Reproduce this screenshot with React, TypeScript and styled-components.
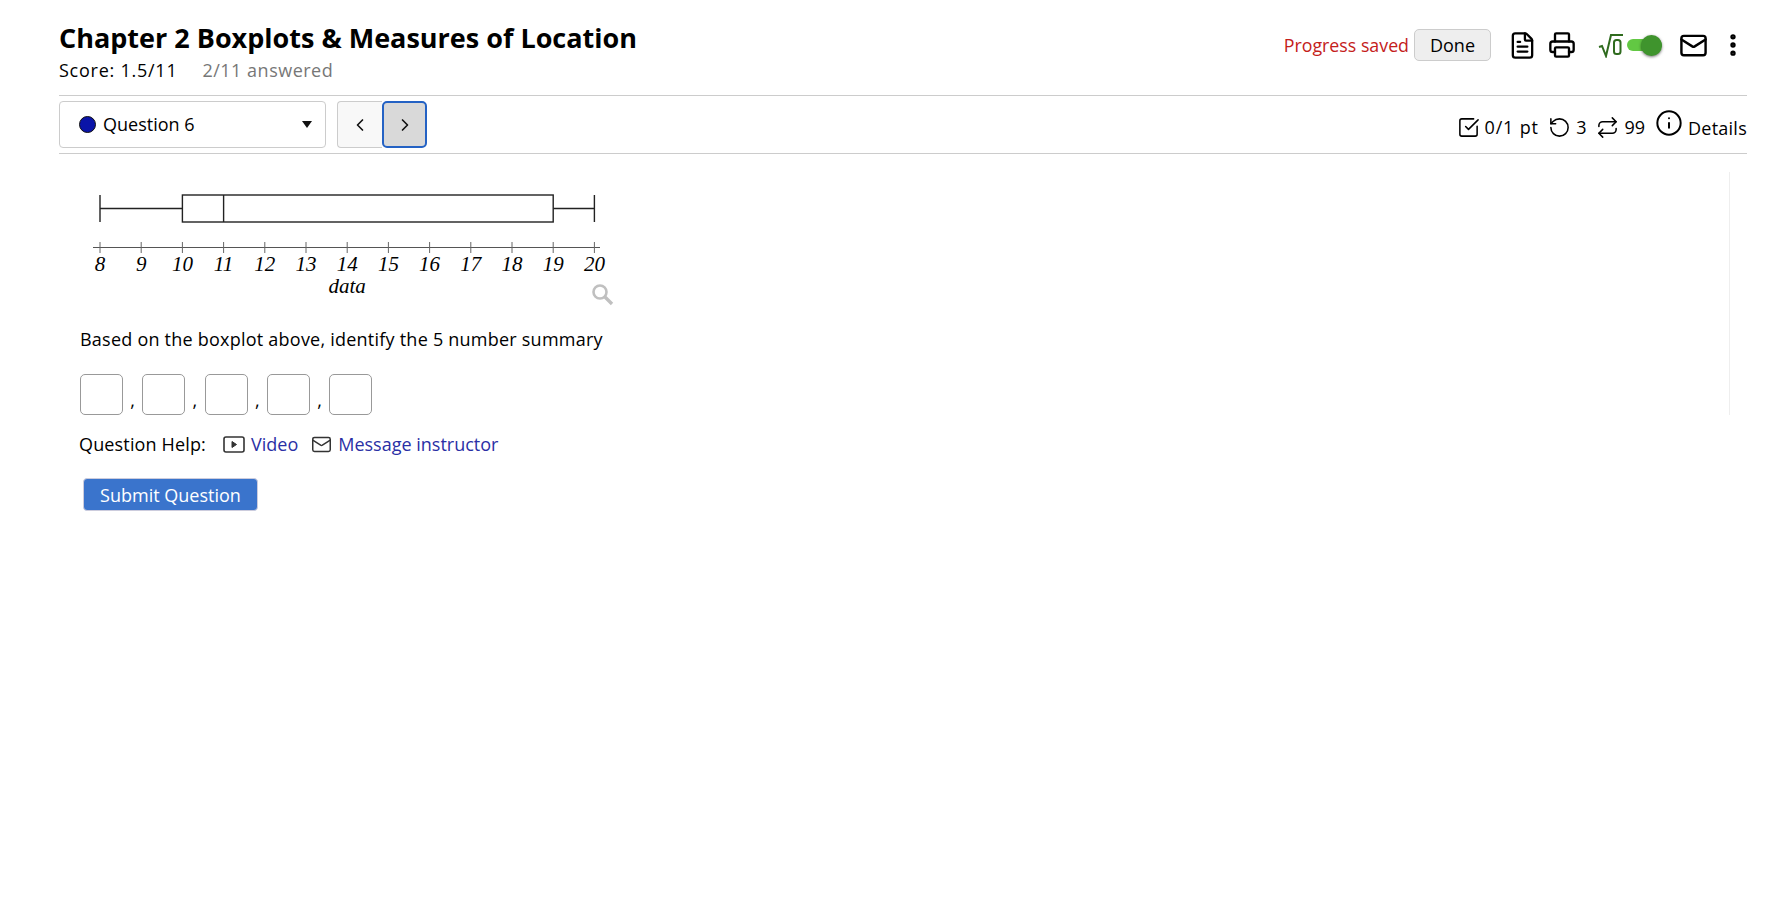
import React from 'react';
import styled, { createGlobalStyle } from 'styled-components';
import { ChevronLeft, ChevronRight, EllipsisVertical, FileText, Info, Mail, Printer, Repeat, RotateCcw, SquareCheckBig } from 'lucide-react';

const GlobalStyle = createGlobalStyle`
  html, body {
    margin: 0;
    padding: 0;
    background: #fff;
    color: #000;
    font-family: "Open Sans", "Liberation Sans", sans-serif;
  }
`;

const Page = styled.div`
  width: 1775px;
  height: 899px;
  padding: 0 28px 0 59px;
  box-sizing: border-box;
  overflow: hidden;
`;

const Header = styled.header`
  height: 95px;
  display: flex;
  justify-content: space-between;
  border-bottom: 1px solid #ccc;
  box-sizing: content-box;
`;

const TitleBlock = styled.div`
  padding-top: 18px;
`;

const Title = styled.h1`
  margin: 0;
  font-size: 27px;
  line-height: 40px;
  font-weight: 700;
`;

const ScoreRow = styled.div`
  display: flex;
  gap: 25px;
  font-size: 18px;
  line-height: 24px;
  letter-spacing: 0.75px;
`;

const Answered = styled.span`
  color: #777;
  letter-spacing: 0.5px;
`;

const Tools = styled.div`
  display: flex;
  align-items: center;
  height: 32px;
  margin-top: 29px;
`;

const SavedText = styled.span`
  color: #c4201a;
  font-size: 17.8px;
  margin-right: 5px;
`;

const DoneButton = styled.button`
  width: 77px;
  height: 32px;
  padding: 0;
  border: 1px solid #ccc;
  border-radius: 5px;
  background: #eee;
  color: #000;
  font: inherit;
  font-size: 18px;
`;

const ToolIcon = styled.span<{ $left: number }>`
  display: flex;
  margin-left: ${({ $left }) => $left}px;
`;

const SqrtIcon = styled.svg`
  display: block;
  margin-left: 22.5px;
`;

const Toggle = styled.span`
  position: relative;
  display: block;
  width: 35px;
  height: 12px;
  margin-left: 4px;
  border-radius: 6px;
  background: #62c843;
`;

const ToggleKnob = styled.span`
  position: absolute;
  right: 0;
  top: -4.5px;
  width: 21px;
  height: 21px;
  border-radius: 50%;
  background: #3f942d;
  box-shadow: 0 1px 3px rgba(0, 0, 0, 0.55);
`;

const QuestionBar = styled.div`
  height: 57px;
  display: flex;
  align-items: center;
  justify-content: space-between;
  border-bottom: 1px solid #ccc;
`;

const Nav = styled.div`
  display: flex;
  align-items: center;
`;

const QuestionSelect = styled.div`
  width: 267px;
  height: 47px;
  box-sizing: border-box;
  padding: 0 13px 0 19px;
  display: flex;
  align-items: center;
  gap: 7px;
  border: 1px solid #ccc;
  border-radius: 4px;
  font-size: 18px;
`;

const QuestionLabel = styled.span`
  position: relative;
  top: -1px;
`;

const StatusDot = styled.span`
  width: 15px;
  height: 15px;
  border-radius: 50%;
  background: #0a14a8;
  border: 1px solid #111;
`;

const Caret = styled.span`
  margin-left: auto;
  width: 0;
  height: 0;
  border-left: 5px solid transparent;
  border-right: 5px solid transparent;
  border-top: 7px solid #111;
`;

const PrevButton = styled.button`
  margin-left: 11px;
  width: 45px;
  height: 47px;
  padding: 0;
  display: flex;
  align-items: center;
  justify-content: center;
  background: #f8f8f8;
  border: 1px solid #ccc;
  border-right: 0;
  border-radius: 4px 0 0 4px;
`;

const NextButton = styled.button`
  width: 45px;
  height: 47px;
  padding: 0;
  display: flex;
  align-items: center;
  justify-content: center;
  background: #d9d9d9;
  border: 2px solid #2462c4;
  border-radius: 5px;
`;

const Stats = styled.div`
  display: flex;
  align-items: center;
  padding-top: 5px;
  font-size: 18px;
`;

const Stat = styled.span<{ $left: number; $spacing: number }>`
  display: flex;
  align-items: center;
  gap: 5px;
  margin-left: ${({ $left }) => $left}px;
  letter-spacing: ${({ $spacing }) => $spacing}px;
`;

const DetailsLabel = styled.span`
  position: relative;
  top: 1px;
`;

const InfoIcon = styled.span`
  display: flex;
  position: relative;
  top: -4px;
`;

const Body = styled.main`
  margin-top: 18px;
  height: 243px;
  border-right: 1px solid #eee;
  margin-right: 17px;
  padding-left: 21px;
`;

const Chart = styled.svg`
  display: block;
  margin-bottom: 21px;
`;

const Prompt = styled.p`
  margin: 0 0 23px;
  font-size: 18px;
  line-height: 24px;
  letter-spacing: 0.23px;
`;

const AnswerRow = styled.div`
  display: flex;
  align-items: flex-end;
  height: 41px;
`;

const AnswerBox = styled.span`
  display: block;
  width: 43px;
  height: 41px;
  box-sizing: border-box;
  border: 1px solid #999;
  border-radius: 5px;
`;

const Comma = styled.span`
  width: 19.3px;
  text-align: center;
  font-size: 18px;
  line-height: 30px;
`;

const HelpRow = styled.div`
  display: flex;
  align-items: center;
  margin: 17px 0 0 -1px;
  font-size: 18px;
  line-height: 24px;
`;

const HelpLabel = styled.span`
  letter-spacing: 0.15px;
`;

const HelpLink = styled.a<{ $left: number }>`
  display: flex;
  align-items: center;
  gap: 6px;
  margin-left: ${({ $left }) => $left}px;
  color: #2a2fa5;
`;

const SubmitButton = styled.button`
  display: block;
  margin: 22px 0 0 3px;
  width: 175px;
  height: 33px;
  padding: 0;
  border: 1px solid #ccd;
  border-radius: 4px;
  background: #3a74cc;
  color: #fff;
  font: inherit;
  font-size: 18px;
`;

const ticks = [8, 9, 10, 11, 12, 13, 14, 15, 16, 17, 18, 19, 20];
const xAt = (v: number): number => 20 + (v - 8) * 41.2;

const BoxPlot: React.FC = () => (
  <Chart width="540" height="134" viewBox="0 0 540 134">
    <g stroke="#222" strokeWidth="1.4" fill="none">
      <path d={`M${xAt(8)} 23V50M${xAt(20)} 23V50M${xAt(8)} 36.5H${xAt(10)}M${xAt(19)} 36.5H${xAt(20)}`} />
      <rect x={xAt(10)} y="23" width={xAt(19) - xAt(10)} height="27" fill="#fff" />
      <path d={`M${xAt(11)} 23V50`} />
    </g>
    <path d="M13 75.5H520" stroke="#555" strokeWidth="1" />
    {ticks.map(t => (
      <g key={t}>
        <path d={`M${xAt(t)} 70V81`} stroke="#666" strokeWidth="1" />
        <text x={xAt(t)} y="99" textAnchor="middle" fontFamily="Liberation Serif, serif" fontStyle="italic" fontSize="21">
          {t}
        </text>
      </g>
    ))}
    <text x={xAt(14)} y="121" textAnchor="middle" fontFamily="Liberation Serif, serif" fontStyle="italic" fontSize="21">
      data
    </text>
    <g stroke="#c0c0c0" fill="none">
      <circle cx="520" cy="120" r="6.5" strokeWidth="2.6" />
      <path d="M525 125l7 7" strokeWidth="3.4" />
    </g>
  </Chart>
);

const VideoIcon: React.FC = () => (
  <svg width="22" height="17" viewBox="0 0 22 17" fill="none" stroke="#333" strokeWidth="1.6">
    <rect x="1" y="1" width="20" height="15" rx="2" />
    <path d="M9 5.5l4.5 3-4.5 3z" fill="#333" strokeWidth="1" />
  </svg>
);

const App: React.FC = () => (
  <Page>
    <GlobalStyle />
    <Header>
      <TitleBlock>
        <Title>Chapter 2 Boxplots &amp; Measures of Location</Title>
        <ScoreRow>
          <span>Score: 1.5/11</span>
          <Answered>2/11 answered</Answered>
        </ScoreRow>
      </TitleBlock>
      <Tools>
        <SavedText>Progress saved</SavedText>
        <DoneButton>Done</DoneButton>
        <ToolIcon $left={16.5}>
          <FileText size={29} strokeWidth={1.9} />
        </ToolIcon>
        <ToolIcon $left={11}>
          <Printer size={28} strokeWidth={2} />
        </ToolIcon>
        <SqrtIcon width="25" height="25" viewBox="0 0 25 25" fill="none" stroke="#2f6b1e" strokeWidth="2">
          <path d="M1 14l3-1 4 10L13 2h12" />
          <rect x="16" y="7" width="6.5" height="14" rx="2.5" />
        </SqrtIcon>
        <Toggle>
          <ToggleKnob />
        </Toggle>
        <ToolIcon $left={16.5}>
          <Mail size={29} strokeWidth={2} />
        </ToolIcon>
        <ToolIcon $left={11.5}>
          <EllipsisVertical size={28} strokeWidth={2.6} />
        </ToolIcon>
      </Tools>
    </Header>
    <QuestionBar>
      <Nav>
        <QuestionSelect>
          <StatusDot />
          <QuestionLabel>Question 6</QuestionLabel>
          <Caret />
        </QuestionSelect>
        <PrevButton>
          <ChevronLeft size={20} color="#111" />
        </PrevButton>
        <NextButton>
          <ChevronRight size={20} color="#111" />
        </NextButton>
      </Nav>
      <Stats>
        <Stat $left={0} $spacing={0.8}>
          <SquareCheckBig size={23} strokeWidth={1.6} />
          0/1 pt
        </Stat>
        <Stat $left={9.5} $spacing={0.4}>
          <RotateCcw size={23} strokeWidth={1.6} />3
        </Stat>
        <Stat $left={9.5} $spacing={0}>
          <Repeat size={23} strokeWidth={1.6} />
          99
        </Stat>
        <Stat $left={10} $spacing={0.25}>
          <InfoIcon>
            <Info size={28} strokeWidth={1.7} />
          </InfoIcon>
          <DetailsLabel>Details</DetailsLabel>
        </Stat>
      </Stats>
    </QuestionBar>
    <Body>
      <BoxPlot />
      <Prompt>Based on the boxplot above, identify the 5 number summary</Prompt>
      <AnswerRow>
        <AnswerBox />
        <Comma>,</Comma>
        <AnswerBox />
        <Comma>,</Comma>
        <AnswerBox />
        <Comma>,</Comma>
        <AnswerBox />
        <Comma>,</Comma>
        <AnswerBox />
      </AnswerRow>
      <HelpRow>
        <HelpLabel>Question Help:</HelpLabel>
        <HelpLink $left={17}>
          <VideoIcon />
          Video
        </HelpLink>
        <HelpLink $left={13}>
          <Mail size={21} color="#333" strokeWidth={1.7} />
          Message instructor
        </HelpLink>
      </HelpRow>
      <SubmitButton>Submit Question</SubmitButton>
    </Body>
  </Page>
);

export default App;
